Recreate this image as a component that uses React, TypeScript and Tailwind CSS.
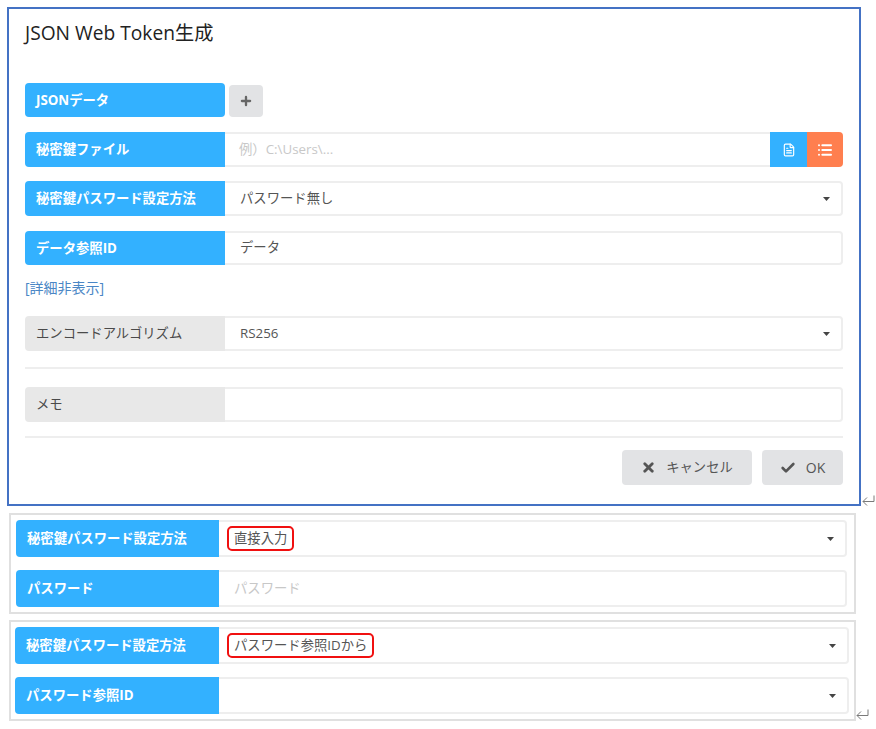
import { Check, FileText, List, Plus, X } from 'lucide-react';
import type { ReactNode } from 'react';

const FONT = "font-['Open_Sans','Noto_Sans_CJK_JP',sans-serif]";

function Caret({ className = '' }: { className?: string }) {
    return (
        <svg width="7" height="4" viewBox="0 0 7 4" className={`shrink-0 ${className}`}>
            <path d="M0 0h7L3.500 4z" fill="#444" />
        </svg>
    );
}

function ReturnMark() {
    return (
        <svg width="13" height="11" viewBox="0 0 13 11" fill="none" stroke="#7a7a7a" strokeWidth="1">
            <path d="M12 0.5v6H1M5 2.5 1 6.500l4 4" />
        </svg>
    );
}

interface RowProps {
    label: string;
    gray?: boolean;
    width?: string;
    height?: string;
    children?: ReactNode;
    className?: string;
}

function Row({ label, gray, width = 'w-[200px]', height = 'h-[35px]', children, className = '' }: RowProps) {
    return (
        <div className={`flex ${height} ${className}`}>
            <div
                className={`flex ${width} shrink-0 items-center rounded-l-[4px] pl-[11px] pt-px text-[13.33px] ${
                    gray ? 'bg-[#e8e8e8] text-[#4a4a4a]' : 'bg-[#33b1ff] font-bold text-white'
                }`}
            >
                {label}
            </div>
            {children}
        </div>
    );
}

function Field({ children, caret, placeholder }: { children?: ReactNode; caret?: boolean; placeholder?: boolean }) {
    return (
        <div
            className={`flex min-w-0 flex-1 items-center justify-between rounded-r-[4px] border-2 border-l-0 border-[#eeeeee] pl-[15px] pr-[11px] text-[13.33px] ${
                placeholder ? 'text-[#c8c8c8]' : 'text-[#555555]'
            }`}
        >
            <span>{children}</span>
            {caret && <Caret />}
        </div>
    );
}

function Highlighted({ children }: { children: ReactNode }) {
    return (
        <span className="-ml-[7px] inline-block rounded-[5px] border-2 border-[#f01010] px-[5px] py-px leading-[19px]">
            {children}
        </span>
    );
}

export default function App() {
    return (
        <div className={`h-[729px] w-[876px] overflow-hidden bg-white pl-[7px] pt-[7px] ${FONT}`}>
            <div className="flex items-end">
                <div className="h-[499px] w-[854px] border-2 border-[#4472c4] pb-[16px] pl-[16px] pr-[16px] pt-[11px]">
                    <h1 className="h-[63px] text-[19.2px] leading-[26px] text-[#222222]">JSON Web Token生成</h1>

                    <div className="flex h-[34px] items-end">
                        <div className="flex h-[34px] w-[200px] items-center rounded-[4px] bg-[#33b1ff] pl-[11px] pt-px text-[13.33px] font-bold text-white">
                            JSONデータ
                        </div>
                        <div className="ml-[4px] flex h-[32px] w-[34px] items-center justify-center rounded-[4px] bg-[#e2e3e5]">
                            <Plus size={14} strokeWidth={4} className="text-[#666666]" />
                        </div>
                    </div>

                    <Row label="秘密鍵ファイル" className="mt-[15px]">
                        <div className="flex min-w-0 flex-1 overflow-hidden rounded-r-[4px]">
                            <div className="flex flex-1 items-center border-y-2 border-[#eeeeee] pl-[14px] text-[13.33px] text-[#c8c8c8]">
                                例）C:\Users\...
                            </div>
                            <div className="flex w-[37px] items-center justify-center bg-[#33b1ff]">
                                <FileText size={14} className="text-white" />
                            </div>
                            <div className="flex w-[36px] items-center justify-center bg-[#ff7f4f]">
                                <List size={16} strokeWidth={3} className="text-white" />
                            </div>
                        </div>
                    </Row>

                    <Row label="秘密鍵パスワード設定方法" className="mt-[14px]">
                        <Field caret>パスワード無し</Field>
                    </Row>

                    <Row label="データ参照ID" className="mt-[15px]" height="h-[34px]">
                        <Field>データ</Field>
                    </Row>

                    <a className="mt-[13px] block h-[20px] text-[14px] leading-[20px] text-[#4a86c5]">[詳細非表示]</a>

                    <Row label="エンコードアルゴリズム" gray className="mt-[18px]">
                        <Field caret>RS256</Field>
                    </Row>

                    <div className="mt-[16px] border-t-2 border-[#eeeeee]" />

                    <Row label="メモ" gray className="mt-[18px]">
                        <Field />
                    </Row>

                    <div className="mt-[14px] border-t-2 border-[#eeeeee]" />

                    <div className="mt-[12px] flex justify-end gap-[10px]">
                        <button className="flex h-[35px] w-[130px] items-center justify-center gap-[10px] rounded-[4px] bg-[#e2e3e5] text-[13.33px] text-[#555555]">
                            <X size={15} strokeWidth={4.5} />
                            キャンセル
                        </button>
                        <button className="flex h-[35px] w-[81px] items-center justify-center gap-[10px] rounded-[4px] bg-[#e2e3e5] text-[14px] text-[#555555]">
                            <Check size={16} strokeWidth={4} />
                            OK
                        </button>
                    </div>
                </div>
                <div className="mb-0 ml-[1px]">
                    <ReturnMark />
                </div>
            </div>

            <div className="ml-[2px] mt-[7px] h-[101px] w-[847px] border-2 border-[#e0e0e0] pl-[5px] pr-[7px] pt-[5px]">
                <Row label="秘密鍵パスワード設定方法" width="w-[203px]" height="h-[37px]">
                    <Field caret>
                        <Highlighted>直接入力</Highlighted>
                    </Field>
                </Row>
                <Row label="パスワード" width="w-[203px]" height="h-[37px]" className="mt-[13px]">
                    <Field placeholder>パスワード</Field>
                </Row>
            </div>

            <div className="flex items-end">
                <div className="ml-[2px] mt-[6px] h-[101px] w-[847px] border-2 border-[#e0e0e0] pl-[4px] pr-[5px] pt-[5px]">
                    <Row label="秘密鍵パスワード設定方法" width="w-[204px]" height="h-[37px]">
                        <Field caret>
                            <Highlighted>パスワード参照IDから</Highlighted>
                        </Field>
                    </Row>
                    <Row label="パスワード参照ID" width="w-[204px]" height="h-[37px]" className="mt-[13px]">
                        <Field caret />
                    </Row>
                </div>
                <div className="mb-px">
                    <ReturnMark />
                </div>
            </div>
        </div>
    );
}
